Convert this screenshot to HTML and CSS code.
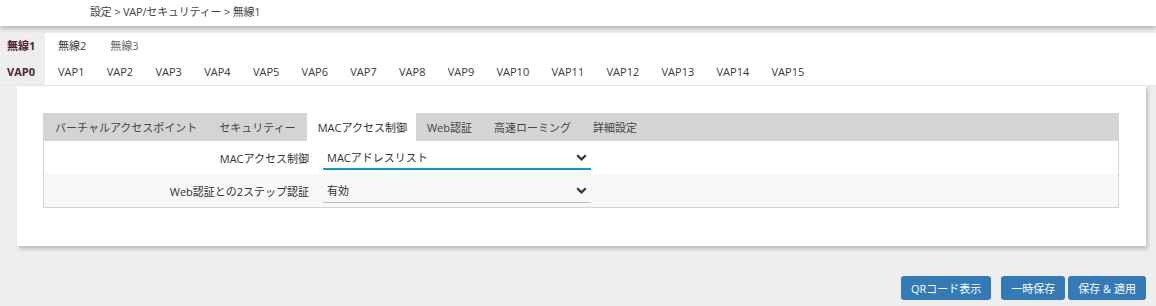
FILE: index.html
```html
<!DOCTYPE html>
<html lang="ja">
<head>
<meta charset="utf-8">
<link rel="stylesheet" href="styles.css">
</head>
<body>
<header class="topbar">
  <div class="crumb">設定 &gt; VAP/セキュリティー &gt; 無線1</div>
</header>

<nav class="tabrows">
  <div class="tabrow row-radio">
    <span class="tab active">無線1</span>
    <span class="tab">無線2</span>
    <span class="tab dim">無線3</span>
  </div>
  <div class="tabrow row-vap">
    <span class="tab active">VAP0</span>
    <span class="tab">VAP1</span>
    <span class="tab">VAP2</span>
    <span class="tab">VAP3</span>
    <span class="tab">VAP4</span>
    <span class="tab">VAP5</span>
    <span class="tab">VAP6</span>
    <span class="tab">VAP7</span>
    <span class="tab">VAP8</span>
    <span class="tab">VAP9</span>
    <span class="tab">VAP10</span>
    <span class="tab">VAP11</span>
    <span class="tab">VAP12</span>
    <span class="tab">VAP13</span>
    <span class="tab">VAP14</span>
    <span class="tab">VAP15</span>
  </div>
</nav>

<main class="card">
  <section class="panel">
    <div class="subtabs">
      <span class="subtab">バーチャルアクセスポイント</span>
      <span class="subtab">セキュリティー</span>
      <span class="subtab active">MACアクセス制御</span>
      <span class="subtab">Web認証</span>
      <span class="subtab">高速ローミング</span>
      <span class="subtab">詳細設定</span>
    </div>
    <div class="formrow">
      <label class="flabel">MACアクセス制御</label>
      <div class="select focused">
        <span class="sval">MACアドレスリスト</span>
        <svg class="chev" width="11" height="7" viewBox="0 0 11 7"><path d="M1.2 1.2 L5.5 5.4 L9.8 1.2" fill="none" stroke="#333" stroke-width="2.2"/></svg>
      </div>
    </div>
    <div class="formrow alt">
      <label class="flabel">Web認証との2ステップ認証</label>
      <div class="select">
        <span class="sval">有効</span>
        <svg class="chev" width="11" height="7" viewBox="0 0 11 7"><path d="M1.2 1.2 L5.5 5.4 L9.8 1.2" fill="none" stroke="#333" stroke-width="2.2"/></svg>
      </div>
    </div>
  </section>
</main>

<footer class="actions">
  <button class="btn btn-qr">QRコード表示</button>
  <button class="btn btn-tmp">一時保存</button>
  <button class="btn">保存 &amp; 適用</button>
</footer>
</body>
</html>
```

FILE: styles.css
```css
* { box-sizing: border-box; }

html, body {
  margin: 0;
  padding: 0;
}

body {
  background: #eeeeee;
  font-family: "Open Sans", "Noto Sans CJK JP", sans-serif;
  font-size: 11px;
  color: #333;
  width: 1156px;
  height: 306px;
  overflow: hidden;
}

.topbar {
  height: 26px;
  background: #ffffff;
  box-shadow: 0 2px 5px rgba(0, 0, 0, 0.28);
  display: flex;
  align-items: center;
  padding-left: 90px;
  position: relative;
  z-index: 2;
}

.crumb {
  color: #444;
  line-height: 16px;
  margin-top: -3px;
  font-size: 11px;
  letter-spacing: -0.2px;
}

.tabrows {
  margin-top: 7px;
  background: #ffffff;
  border-bottom: 1px solid #e6e6e6;
}

.tabrow {
  display: flex;
  align-items: stretch;
}

.row-radio { height: 24px; }
.row-vap { height: 28px; }

.tab {
  display: flex;
  align-items: center;
  padding: 0 9.3px 0 13px;
  color: #3a3a3a;
  white-space: nowrap;
}

.row-radio .tab {
  padding-right: 11px;
}

.tab.active,
.row-radio .tab.active {
  width: 45px;
  padding: 0 0 0 7px;
  background: #eeeeee;
  font-weight: 700;
  color: #4e2338;
}

.tab.dim { color: #666; }

.card {
  margin: 0 10px 0 17px;
  background: #ffffff;
  box-shadow: 2px 3px 4px rgba(0, 0, 0, 0.2);
  padding: 27px 27px 38px 26px;
}

.panel {
  border: 1px solid #d4d4d4;
  border-top: none;
}

.subtabs {
  display: flex;
  height: 28px;
  background: #d4d4d4;
  margin: 0 -1px;
}

.subtab {
  display: flex;
  align-items: center;
  padding: 0 11px;
  color: #444;
  font-size: 11px;
  white-space: nowrap;
}

.subtab:first-child {
  padding-left: 12px;
}

.subtab.active {
  background: #ffffff;
  color: #333;
  padding-right: 9px;
}

.formrow {
  display: grid;
  grid-template-columns: 265px 268px;
  column-gap: 14px;
  height: 33px;
  align-items: center;
  background: #ffffff;
}

.formrow.alt {
  background: #f8f8f8;
}

.flabel {
  text-align: right;
  color: #333;
  white-space: nowrap;
}

.select {
  height: 22px;
  margin-top: 2px;
  display: flex;
  align-items: center;
  justify-content: space-between;
  padding: 0 4px 2px 4px;
  border-bottom: 1px solid #bdbdbd;
  color: #333;
}

.select.focused {
  border-bottom: 2px solid #0d9ad2;
  padding-bottom: 1px;
}

.chev { display: block; }

.actions {
  display: flex;
  justify-content: flex-end;
  margin-top: 30px;
  padding-right: 10px;
}

.btn {
  height: 24px;
  padding: 0 10px;
  border: none;
  border-radius: 3px;
  background: #337ab7;
  color: #ffffff;
  font-family: "Open Sans", "Noto Sans CJK JP", sans-serif;
  font-size: 11px;
  white-space: nowrap;
}

.btn-qr { margin-right: 10px; }
.btn-tmp { margin-right: 3px; }
```
